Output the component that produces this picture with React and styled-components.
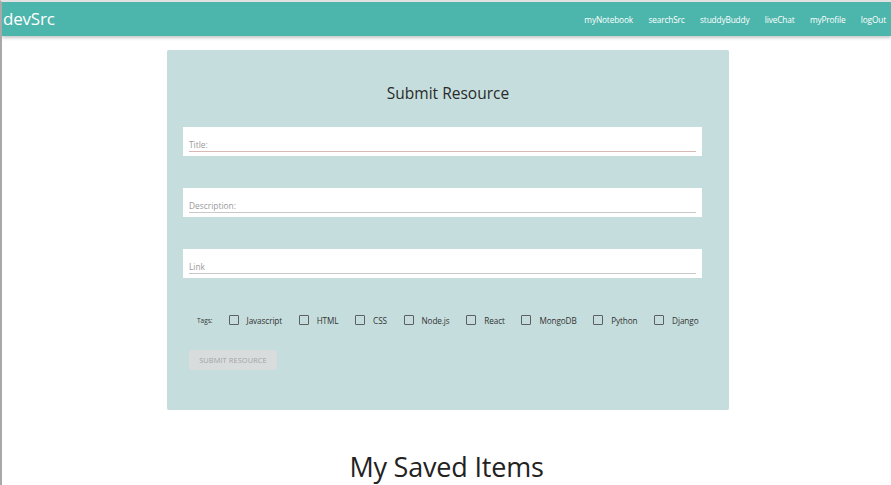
import React from "react";
import styled, { createGlobalStyle } from "styled-components";

const Global = createGlobalStyle`
  html, body { margin: 0; padding: 0; background: #fff; }
  body {
    font-family: "Open Sans", "Noto Sans", sans-serif;
    color: #2b2b2b;
    border-top: 2px solid #e2e2e2;
    border-left: 2px solid #a9a9a9;
    min-height: 483px;
    box-sizing: border-box;
    overflow: hidden;
  }
`;

const Nav = styled.nav`
  height: 34px;
  background: #4db6ac;
  box-shadow: 0 2px 3px rgba(0, 0, 0, 0.22);
  display: flex;
  align-items: center;
  justify-content: space-between;
  padding: 0 5px 0 1px;
  color: #fff;
`;

const Brand = styled.div`
  font-size: 17px;
  letter-spacing: -0.2px;
  margin-top: -2px;
`;

const NavLinks = styled.ul`
  list-style: none;
  margin: 0;
  padding: 0;
  display: flex;
  gap: 15.4px;
`;

const NavLink = styled.li`
  font-size: 8.3px;
  letter-spacing: -0.15px;
`;

const Main = styled.main`
  display: flex;
  flex-direction: column;
  align-items: center;
  padding-top: 14px;
`;

const Card = styled.section`
  width: 562px;
  height: 360px;
  box-sizing: border-box;
  background: #c5dedd;
  border-radius: 2px;
  box-shadow: 0 0 1px rgba(0, 0, 0, 0.08);
  padding: 32px 27px 0 16px;
  display: flex;
  flex-direction: column;
  margin-left: 3px;
`;

const CardTitle = styled.h2`
  margin: 0 0 23px;
  font-weight: 400;
  font-size: 15.5px;
  text-align: center;
  padding-left: 11px;
  color: #2a2a2a;
`;

const Field = styled.div`
  height: 29px;
  background: #fff;
  box-sizing: border-box;
  padding: 0 6px;
  display: flex;
  align-items: flex-end;
  margin-bottom: 32px;
`;

const FieldLine = styled.div`
  flex: 1;
  border-bottom: 1px solid ${(p) => p.$line};
  font-size: 8.4px;
  color: #9a9a9a;
  padding-bottom: 1px;
  margin-bottom: 4px;
  line-height: 11px;
`;

const Tags = styled.div`
  display: flex;
  align-items: center;
  padding-left: 14px;
  margin-top: 0;
  height: 20px;
`;

const TagsLabel = styled.span`
  font-size: 6.5px;
  color: #333;
  margin-right: 16px;
`;

const Tag = styled.label`
  display: flex;
  align-items: center;
  font-size: 8.2px;
  color: #333;
  margin-right: 16.6px;
  letter-spacing: -0.1px;
`;

const Box = styled.span`
  width: 8px;
  height: 8px;
  border: 1.5px solid #5f5f5f;
  border-radius: 1px;
  margin-right: 8px;
`;

const SubmitButton = styled.button`
  align-self: flex-start;
  margin: 20px 0 0 6px;
  width: 88px;
  height: 20px;
  border: none;
  border-radius: 2px;
  background: #d9dcdc;
  color: #a2a5a5;
  font-family: inherit;
  font-size: 7.4px;
  letter-spacing: 0.1px;
  padding: 0;
`;

const Heading = styled.h1`
  margin: 38px 0 0;
  font-weight: 400;
  font-size: 27px;
  color: #222;
  letter-spacing: -0.2px;
`;

const links = ["myNotebook", "searchSrc", "studdyBuddy", "liveChat", "myProfile", "logOut"];
const fields = [
  { label: "Title:", line: "#d9b8b8" },
  { label: "Description:", line: "#c8c8c8" },
  { label: "Link", line: "#c8c8c8" },
];
const tags = ["Javascript", "HTML", "CSS", "Node.js", "React", "MongoDB", "Python", "Django"];

export default function App() {
  return (
    <>
      <Global />
      <Nav>
        <Brand>devSrc</Brand>
        <NavLinks>
          {links.map((l) => (
            <NavLink key={l}>{l}</NavLink>
          ))}
        </NavLinks>
      </Nav>
      <Main>
        <Card>
          <CardTitle>Submit Resource</CardTitle>
          {fields.map((f) => (
            <Field key={f.label}>
              <FieldLine $line={f.line}>{f.label}</FieldLine>
            </Field>
          ))}
          <Tags>
            <TagsLabel>Tags:</TagsLabel>
            {tags.map((t) => (
              <Tag key={t}>
                <Box />
                {t}
              </Tag>
            ))}
          </Tags>
          <SubmitButton>SUBMIT RESOURCE</SubmitButton>
        </Card>
        <Heading>My Saved Items</Heading>
      </Main>
    </>
  );
}
